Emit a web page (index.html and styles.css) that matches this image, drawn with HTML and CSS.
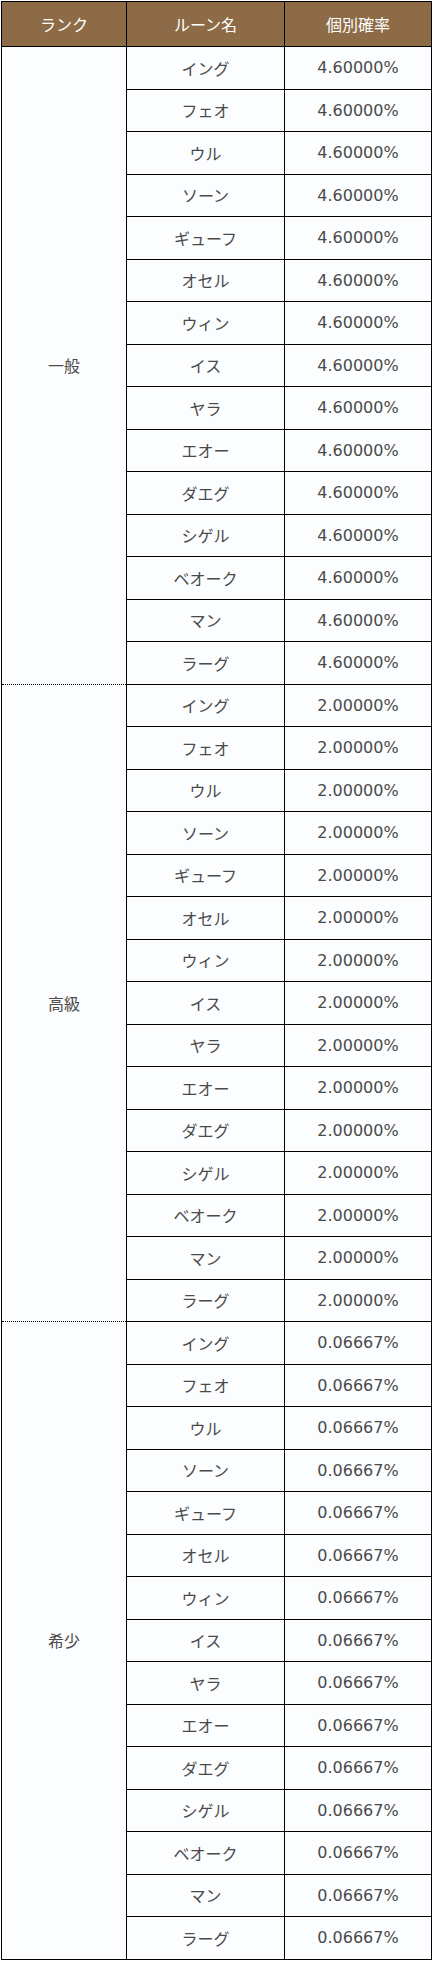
FILE: index.html
```html
<!DOCTYPE html>
<html lang="ja">
<head>
<meta charset="utf-8">
<link rel="stylesheet" href="styles.css">
</head>
<body>
<table class="rates">
<colgroup><col class="c1"><col class="c2"><col class="c3"></colgroup>
<thead>
<tr><th>ランク</th><th>ルーン名</th><th>個別確率</th></tr>
</thead>
<tbody>
<tr><td class="rank" rowspan="15">一般</td><td>イング</td><td>4.60000%</td></tr>
<tr><td>フェオ</td><td>4.60000%</td></tr>
<tr><td>ウル</td><td>4.60000%</td></tr>
<tr><td>ソーン</td><td>4.60000%</td></tr>
<tr><td>ギューフ</td><td>4.60000%</td></tr>
<tr><td>オセル</td><td>4.60000%</td></tr>
<tr><td>ウィン</td><td>4.60000%</td></tr>
<tr><td>イス</td><td>4.60000%</td></tr>
<tr><td>ヤラ</td><td>4.60000%</td></tr>
<tr><td>エオー</td><td>4.60000%</td></tr>
<tr><td>ダエグ</td><td>4.60000%</td></tr>
<tr><td>シゲル</td><td>4.60000%</td></tr>
<tr><td>ベオーク</td><td>4.60000%</td></tr>
<tr><td>マン</td><td>4.60000%</td></tr>
<tr><td>ラーグ</td><td>4.60000%</td></tr>
<tr><td class="rank" rowspan="15">高級</td><td>イング</td><td>2.00000%</td></tr>
<tr><td>フェオ</td><td>2.00000%</td></tr>
<tr><td>ウル</td><td>2.00000%</td></tr>
<tr><td>ソーン</td><td>2.00000%</td></tr>
<tr><td>ギューフ</td><td>2.00000%</td></tr>
<tr><td>オセル</td><td>2.00000%</td></tr>
<tr><td>ウィン</td><td>2.00000%</td></tr>
<tr><td>イス</td><td>2.00000%</td></tr>
<tr><td>ヤラ</td><td>2.00000%</td></tr>
<tr><td>エオー</td><td>2.00000%</td></tr>
<tr><td>ダエグ</td><td>2.00000%</td></tr>
<tr><td>シゲル</td><td>2.00000%</td></tr>
<tr><td>ベオーク</td><td>2.00000%</td></tr>
<tr><td>マン</td><td>2.00000%</td></tr>
<tr><td>ラーグ</td><td>2.00000%</td></tr>
<tr><td class="rank" rowspan="15">希少</td><td>イング</td><td>0.06667%</td></tr>
<tr><td>フェオ</td><td>0.06667%</td></tr>
<tr><td>ウル</td><td>0.06667%</td></tr>
<tr><td>ソーン</td><td>0.06667%</td></tr>
<tr><td>ギューフ</td><td>0.06667%</td></tr>
<tr><td>オセル</td><td>0.06667%</td></tr>
<tr><td>ウィン</td><td>0.06667%</td></tr>
<tr><td>イス</td><td>0.06667%</td></tr>
<tr><td>ヤラ</td><td>0.06667%</td></tr>
<tr><td>エオー</td><td>0.06667%</td></tr>
<tr><td>ダエグ</td><td>0.06667%</td></tr>
<tr><td>シゲル</td><td>0.06667%</td></tr>
<tr><td>ベオーク</td><td>0.06667%</td></tr>
<tr><td>マン</td><td>0.06667%</td></tr>
<tr><td>ラーグ</td><td>0.06667%</td></tr>
</tbody>
</table>
</body>
</html>
```

FILE: styles.css
```css
html, body {
  margin: 0;
  padding: 0;
  background: #ffffff;
}
body {
  padding: 1px 0 0 1px;
  font-family: "DejaVu Sans", "Noto Sans CJK JP", sans-serif;
  font-size: 16px;
  color: #4a4a4a;
}
.rates {
  border-collapse: collapse;
  table-layout: fixed;
  width: 430px;
  border: 1px solid #000;
  background: #fbfdfe;
}
.c1 { width: 125px; }
.c2 { width: 158px; }
.c3 { width: 147px; }
.rates th {
  height: 44px;
  padding: 0;
  background: #8d6b47;
  color: #ffffff;
  font-weight: normal;
  text-align: center;
  border: 1px solid #000;
}
.rates tbody tr {
  height: 42.5px;
}
.rates td {
  padding: 0;
  text-align: center;
  vertical-align: middle;
  border: 1px solid #000;
}
.rates td.rank {
  border-top: 1px dotted #000;
  border-bottom: 1px dotted #000;
}
```
